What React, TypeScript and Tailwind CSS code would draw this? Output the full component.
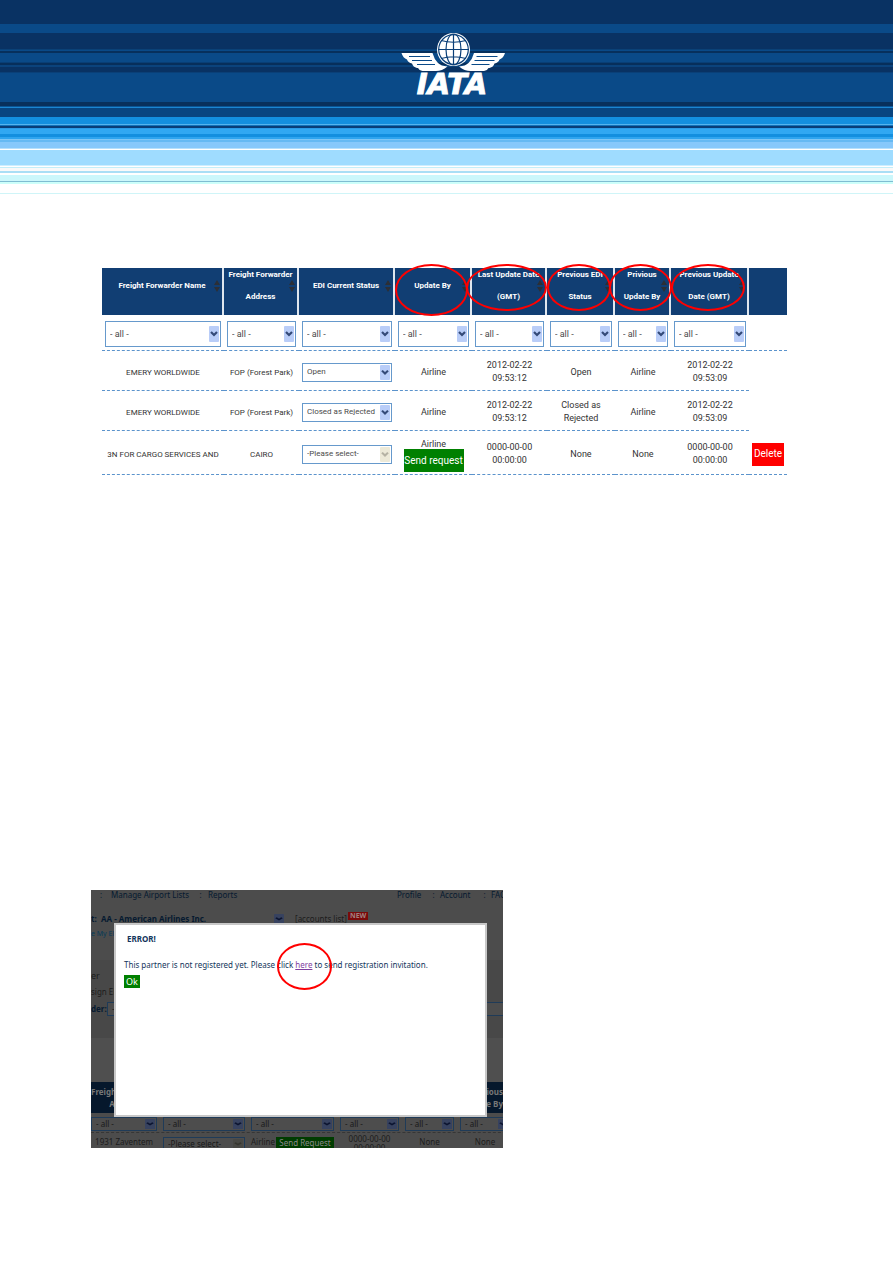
import type { ReactNode } from "react";

const stripes = [
  "h-[24px] bg-[#093263]",
  "h-[9px] bg-[#0a4a88]",
  "h-[16px] bg-[#093263]",
  "h-[1px] bg-[#0a4177]",
  "h-[1px] bg-[#0a4a88]",
  "h-[2px] bg-[#07305c]",
  "h-[9px] bg-[#0a4a88]",
  "h-[1px] bg-[#093f76]",
  "h-[2px] bg-[#072f5b]",
  "h-[2px] bg-[#0b437c]",
  "h-[5px] bg-[#093263]",
  "h-[1px] bg-[#0a4078]",
  "h-[29px] bg-[#0a4a88]",
  "h-[4px] bg-[#08305c]",
  "h-[1px] bg-[#0a5394]",
  "h-[1px] bg-[#1b85d0]",
  "h-[9px] bg-[#084580]",
  "h-[7px] bg-[#138fdf]",
  "h-[1px] bg-[#53b4ee]",
  "h-[1px] bg-[#1272bb]",
  "h-[2px] bg-[#083d78]",
  "h-[1px] bg-[#2a9be6]",
  "h-[5px] bg-[#31a8f2]",
  "h-[3px] bg-[#138fdf]",
  "h-[2px] bg-[#2fa5ef]",
  "h-[1px] bg-[#7cc6f5]",
  "h-[2px] bg-[#66b9f3]",
  "h-[6px] bg-[#87c8fb]",
  "h-[1px] bg-[#b5dffc]",
  "h-[1px] bg-[#ffffff]",
  "h-[15px] bg-[#9fdcff]",
  "h-[1px] bg-[#cdeefe]",
  "h-[1px] bg-[#ffffff]",
  "h-[1px] bg-[#c4eef9]",
  "h-[3px] bg-[#f9f9f9]",
  "h-[2px] bg-[#a9def5]",
  "h-[2px] bg-[#ffffff]",
  "h-[6px] bg-[#cbf7fb]",
  "h-[1px] bg-[#7fbdd2]",
  "h-[2px] bg-[#ccfffa]",
  "h-[9px] bg-[#ffffff]",
  "h-[1px] bg-[#cff5f8]",
];

function Logo() {
  return (
    <svg viewBox="0 0 106 76" className="h-[76px] w-[106px] overflow-visible" role="img" aria-label="IATA">
      <circle cx="53.5" cy="17.5" r="16.5" fill="#fff" />
      <g fill="none" stroke="#0a3f78" strokeWidth="1.2">
        <ellipse cx="53.5" cy="17.5" rx="7.500" ry="15.500" />
        <path d="M53.500 2v31M38 17.500h31M41 8.500q12.500 3.500 25 0M41 26.500q12.500-3.500 25 0" />
        <circle cx="53.500" cy="17.500" r="14.800" />
      </g>
      <path
        d="M1.500 21H32.500Q34 27 38 31Q41 34 47.500 34.500Q42 39 36 39H22.500Q19 38.500 18 36H17Q13 35 12 31.500Q8 30.500 7 27.500Q3 26 1.500 21Z"
        fill="#fff"
      />
      <path
        d="M105 21H74Q72.500 27 68.500 31Q65.500 34 59 34.500Q64.500 39 70.500 39H84Q87.500 38.500 88.500 36H89.500Q93.500 35 94.500 31.500Q98.500 30.500 99.500 27.500Q103.500 26 105 21Z"
        fill="#fff"
      />
      <path
        d="M9 24.500H30M12 28.500H32M17 32.500H35M97.500 24.500H76.500M94.500 28.500H74.500M89.500 32.500H71.500"
        stroke="#0a4a88"
        strokeWidth="1"
      />
      <text
        x="52"
        y="62"
        textAnchor="middle"
        fill="#fff"
        stroke="#fff"
        strokeWidth="1"
        className="font-['DejaVu_Sans',sans-serif] text-[29px] font-bold italic"
      >
        IATA
      </text>
    </svg>
  );
}

function Chevron({ className, arrow = "#344a78" }: { className: string; arrow?: string }) {
  return (
    <svg viewBox="0 0 10 16" preserveAspectRatio="none" className={className} aria-hidden="true">
      <rect width="10" height="16" rx="1" fill="currentColor" />
      <path d="M2 6L5 9L8 6" fill="none" stroke={arrow} strokeWidth="2.2" />
    </svg>
  );
}

function Picker({ label, value, tall, disabled }: { label: string; value: string; tall?: boolean; disabled?: boolean }) {
  return (
    <div className="relative mx-[3px]">
      <select
        aria-label={label}
        disabled={disabled}
        className={
          "block w-full appearance-none border border-[#6699cc] bg-white pl-[4px] leading-none text-[#4a4a4a] opacity-100 " +
          (tall ? "h-[26px] text-[9px]" : "h-[19px] text-[8px]")
        }
      >
        <option>{value}</option>
      </select>
      <Chevron
        arrow={disabled ? "#b5b2a4" : "#344a78"}
        className={
          "pointer-events-none absolute right-[2px] w-[10px] " +
          (tall ? "top-[5px] h-[16px] " : "top-[2px] h-[15px] ") +
          (disabled ? "text-[#ece9d8]" : "text-[#b9cdf8]")
        }
      />
    </div>
  );
}

const columns = [
  { lines: ["Freight Forwarder Name"], col: "w-[122px]" },
  { lines: ["Freight Forwarder", "Address"], col: "w-[75px]" },
  { lines: ["EDI Current Status"], col: "w-[96px]" },
  { lines: ["Update By"], col: "w-[77px]", ring: "left-0 right-[2px] -top-[4px] h-[52px]" },
  { lines: ["Last Update Date", "(GMT)"], col: "w-[75px]", ring: "-left-[6px] -right-[2px] -top-[4px] h-[47px]" },
  { lines: ["Previous EDI", "Status"], col: "w-[68px]", ring: "left-0 right-[2px] -top-[4px] h-[47px]" },
  { lines: ["Privious", "Update By"], col: "w-[56px]", ring: "-left-[6px] -right-[3px] -top-[4px] h-[47px]" },
  { lines: ["Previous Update", "Date (GMT)"], col: "w-[78px]", ring: "left-0 right-[2px] -top-[4px] h-[47px]" },
];

const rows = [
  {
    name: "EMERY WORLDWIDE", address: "FOP (Forest Park)", status: "Open",
    last: ["2012-02-22", "09:53:12"], edi: ["Open"], by: "Airline", prev: ["2012-02-22", "09:53:09"],
  },
  {
    name: "EMERY WORLDWIDE", address: "FOP (Forest Park)", status: "Closed as Rejected",
    last: ["2012-02-22", "09:53:12"], edi: ["Closed as", "Rejected"], by: "Airline", prev: ["2012-02-22", "09:53:09"],
  },
  {
    name: "3N FOR CARGO SERVICES AND", address: "CAIRO", status: "-Please select-", pending: true,
    last: ["0000-00-00", "00:00:00"], edi: ["None"], by: "None", prev: ["0000-00-00", "00:00:00"],
  },
];

function Lines({ items }: { items: string[] }) {
  return (
    <>
      {items.map((t) => (
        <span key={t} className="block whitespace-nowrap">{t}</span>
      ))}
    </>
  );
}

function Cell({ children, plain }: { children?: ReactNode; plain?: boolean }) {
  return (
    <td className={"px-0 pt-[3px] pb-0 text-center align-middle " + (plain ? "" : "border-b border-dashed border-[#5b93cc]")}>
      {children}
    </td>
  );
}

function PartnersTable() {
  return (
    <table className="w-full table-fixed border-separate border-spacing-0 font-['Roboto','Liberation_Sans',sans-serif] text-[9px] leading-[13px] text-[#333]">
      <colgroup>
        {columns.map((c) => (
          <col key={c.lines.join(" ")} className={c.col} />
        ))}
        <col className="w-[38px]" />
      </colgroup>
      <thead>
        <tr className="h-[47px]">
          {columns.map((c) => (
            <th
              key={c.lines.join(" ")}
              scope="col"
              className="relative border-r-2 border-[#dfe6ee] bg-[#113e73] p-0 text-center align-top text-[8px] leading-[22px] font-bold text-white"
            >
              <div className="flex h-[36px] flex-col justify-center">
                <Lines items={c.lines} />
              </div>
              <svg viewBox="0 0 6 12" className="absolute top-[12px] right-[2px] h-[12px] w-[6px]" aria-hidden="true">
                <path d="M3 0L6 5H0ZM3 12L0 7H6Z" fill="#2c2f36" />
              </svg>
              {c.ring && <span className={"absolute z-10 rounded-[50%] border-2 border-[#f00] " + c.ring} />}
            </th>
          ))}
          <td className="bg-[#113e73]" />
        </tr>
      </thead>
      <tbody>
        <tr className="h-[36px]">
          {columns.map((c) => (
            <Cell key={c.lines.join(" ")}>
              <Picker tall label={"Filter by " + c.lines.join(" ")} value="- all -" />
            </Cell>
          ))}
          <Cell />
        </tr>
        {rows.map((r, i) => (
          <tr key={i} className={r.pending ? "h-[44px]" : "h-[40px]"}>
            <Cell><span className="text-[8px] whitespace-nowrap">{r.name}</span></Cell>
            <Cell><span className="text-[8px] whitespace-nowrap">{r.address}</span></Cell>
            <Cell><Picker label={"EDI status " + (i + 1)} value={r.status} disabled={r.pending} /></Cell>
            <Cell>
              {r.pending ? (
                <div className="flex flex-col items-center pt-[4px]">
                  <span className="leading-[9px]">Airline</span>
                  <button className="h-[23px] w-[60px] bg-[#008000] text-[10px] leading-none whitespace-nowrap text-white">
                    Send request
                  </button>
                </div>
              ) : (
                "Airline"
              )}
            </Cell>
            <Cell><Lines items={r.last} /></Cell>
            <Cell><Lines items={r.edi} /></Cell>
            <Cell>{r.by}</Cell>
            <Cell><Lines items={r.prev} /></Cell>
            <Cell plain={!r.pending}>
              {r.pending && (
                <button className="h-[23px] w-[32px] bg-[#f00] text-[10px] leading-none text-white">Delete</button>
              )}
            </Cell>
          </tr>
        ))}
      </tbody>
    </table>
  );
}

function DimPicker({ value, width, label, faded }: { value: string; width: string; label: string; faded?: boolean }) {
  return (
    <div className={"relative shrink-0 " + width}>
      <select
        aria-label={label}
        disabled={faded}
        className="block h-[14px] w-full appearance-none border border-[#1f3b58] bg-[#4d4d4d] pl-1 text-[8px] leading-none text-[#191919] opacity-100"
      >
        <option>{value}</option>
      </select>
      <Chevron
        arrow={faded ? "#35352f" : "#0c1430"}
        className={"pointer-events-none absolute top-[2px] right-[2px] h-[10px] w-[10px] " + (faded ? "text-[#484844]" : "text-[#37425f]")}
      />
    </div>
  );
}

function ErrorShot() {
  return (
    <section className="relative h-[258px] w-[412px] overflow-hidden bg-[#4c4c4c] font-['Noto_Sans','Liberation_Sans',sans-serif] text-[8px] leading-[10px] text-[#1c1c1c]">
      <div className="flex h-full w-[440px] flex-col">
        <nav className="flex h-[13px] items-start text-[#061a30]">
          <span className="w-[20px] text-center">:</span>
          <a href="#lists" className="w-[82px]">Manage Airport Lists</a>
          <span className="w-[15px] text-center">:</span>
          <a href="#reports" className="w-[189px]">Reports</a>
          <a href="#profile" className="w-[30px]">Profile</a>
          <span className="w-[13px] text-center">:</span>
          <a href="#account" className="w-[38px]">Account</a>
          <span className="w-[13px] text-center">:</span>
          <a href="#faq">FAQ</a>
        </nav>
        <div className="flex h-[26px] items-center pt-[6px]">
          <b className="w-[10px] text-[#061a30]">t:</b>
          <b className="w-[173px] text-[#061a30]">AA - American Airlines Inc.</b>
          <Chevron arrow="#0c1430" className="h-[10px] w-[10px] text-[#37425f]" />
          <span className="ml-[11px] w-[53px] whitespace-nowrap">[accounts list]</span>
          <span className="mb-[6px] h-[8px] bg-[#7a0a0a] px-[2px] text-[7px] leading-[8px] font-bold text-[#a08080]">NEW</span>
        </div>
        <div className="h-[31px] text-[7px] text-[#063a58]">e My EDI</div>
        <div className="flex h-[78px] flex-col bg-[#484848]">
          <span className="pt-[11px] text-[9px]">er</span>
          <span className="pt-[6px]">sign EDI</span>
          <div className="flex items-center gap-[3px] pt-[5px]">
            <b className="w-[13px] text-[#061a30]">der:</b>
            <DimPicker label="Forwarder" value="-" width="w-[420px]" />
          </div>
        </div>
        <div className="h-[44px] bg-[#4f4f4f]" />
        <div className="flex h-[31px] shrink-0 justify-between bg-[#06182c] pt-[4px] pr-[28px] leading-[12px] font-bold text-[#777]">
          <span className="text-right">Freight<br />Ad</span>
          <span className="text-right">ious<br />e By</span>
        </div>
        <div className="flex h-[20px] shrink-0 gap-[6px] border-b border-dashed border-[#363636] pt-[4px]">
          <DimPicker label="Address" value="- all -" width="w-[66px]" />
          <DimPicker label="Status" value="- all -" width="w-[82px]" />
          <DimPicker label="Update by" value="- all -" width="w-[83px]" />
          <DimPicker label="Last update" value="- all -" width="w-[59px]" />
          <DimPicker label="Previous status" value="- all -" width="w-[49px]" />
          <DimPicker label="Previous update by" value="- all -" width="w-[50px]" />
        </div>
        <div className="flex h-[15px] shrink-0 gap-[6px] pt-[4px] text-center">
          <span className="w-[66px] shrink-0">1931 Zaventem</span>
          <DimPicker faded label="Partner status" value="-Please select-" width="w-[82px]" />
          <span className="flex w-[83px] shrink-0 items-start justify-between">
            Airline
            <button className="h-[12px] w-[58px] bg-[#003c00] leading-[12px] whitespace-nowrap text-[#8a8a8a]">Send Request</button>
          </span>
          <span className="-mt-[3px] w-[59px] shrink-0 leading-[9px]">0000-00-00<br />00:00:00</span>
          <span className="w-[49px] shrink-0">None</span>
          <span className="w-[50px] shrink-0">None</span>
        </div>
      </div>
      <div
        role="dialog"
        aria-labelledby="error-title"
        className="absolute top-[33px] left-[23px] h-[194px] w-[373px] border-2 border-[#c8c8c8] bg-white pt-[9px] pl-[8px] text-[#12355b]"
      >
        <h2 id="error-title" className="pl-[3px] text-[8px] font-bold">ERROR!</h2>
        <p className="mt-[16px] whitespace-nowrap">
          This partner is not registered yet. Please click{" "}
          <span className="relative inline-block">
            <a href="#invite" className="text-[#8040a0] underline">here</a>
            <span className="absolute -top-[17px] -left-[18px] h-[47px] w-[55px] rounded-[50%] border-2 border-[#f00]" />
          </span>{" "}
          to send registration invitation.
        </p>
        <button className="mt-[5px] block h-[13px] w-[16px] bg-[#008000] text-[9px] leading-none text-white">Ok</button>
      </div>
    </section>
  );
}

export default function App() {
  return (
    <div className="min-h-screen bg-white">
      <header className="relative">
        <div className="flex flex-col">
          {stripes.map((s, i) => (
            <div key={i} className={s} />
          ))}
        </div>
        <div className="absolute inset-x-0 top-[32px] flex justify-center pl-[12px]">
          <Logo />
        </div>
      </header>
      <main className="pt-[74px] pb-[114px]">
        <div className="pr-[106px] pl-[102px]">
          <PartnersTable />
        </div>
        <div className="pt-[415px] pl-[91px]">
          <ErrorShot />
        </div>
      </main>
    </div>
  );
}
